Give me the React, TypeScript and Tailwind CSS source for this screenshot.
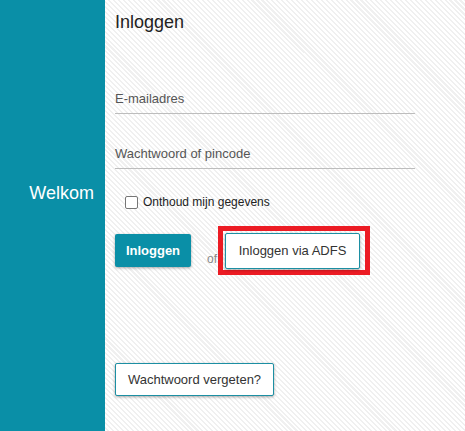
import React from "react";

export default function App() {
  return (
    <div
      className="flex h-[431px] w-full overflow-hidden"
      style={{ fontFamily: '"Liberation Sans", Arial, sans-serif' }}
    >
      <aside className="flex w-[105px] shrink-0 flex-col bg-[#0a8fa7] pr-[11px] pt-[182px] text-right">
        <span className="text-[18px] leading-[22px] text-white">Welkom</span>
      </aside>
      <main className="flex flex-1 flex-col bg-white bg-[repeating-linear-gradient(45deg,#ffffff_0px,#ffffff_2px,#f0f0f0_2px,#f0f0f0_3.5px,#ffffff_3.5px)] pl-[10px]">
        <h1 className="mt-[11px] text-[18px] leading-[22px] text-[#222]">Inloggen</h1>

        <div className="mt-[58px] w-[300px] border-b border-[#bdbdbd] pb-[6px]">
          <span className="block text-[13px] leading-[16px] text-[#555]">E-mailadres</span>
        </div>

        <div className="mt-[32px] w-[300px] border-b border-[#bdbdbd] pb-[6px]">
          <span className="block text-[13px] leading-[16px] text-[#555]">Wachtwoord of pincode</span>
        </div>

        <label className="ml-[10px] mt-[25px] flex h-[16px] items-center gap-[5px]">
          <span className="h-[13px] w-[13px] rounded-[2px] border border-[#767676] bg-white" />
          <span className="text-[12px] leading-[16px] text-[#222]">Onthoud mijn gegevens</span>
        </label>

        <div className="mt-[16px] flex items-center">
          <button className="h-[33px] w-[76px] rounded-[2px] bg-[#0a8fa7] text-[13px] font-bold text-white shadow-[0_1px_3px_rgba(0,0,0,0.35)]">
            Inloggen
          </button>
          <span className="ml-[16px] mt-[16px] text-[12px] leading-[16px] text-[#888]">of</span>
          <div className="ml-[1px] border-[5px] border-[#ec1c24] pb-[1px] pl-[2px] pr-[5px] pt-[2px]">
            <button className="h-[36px] w-[135px] rounded-[2px] border border-[#1c8fa3] bg-white text-[13px] text-[#333] shadow-[0_1px_3px_rgba(0,0,0,0.35)]">
              Inloggen via ADFS
            </button>
          </div>
        </div>

        <div className="mt-[88px]">
          <button className="h-[33px] w-[159px] rounded-[2px] border border-[#1c8fa3] bg-white text-[13px] text-[#333] shadow-[0_1px_3px_rgba(0,0,0,0.35)]">
            Wachtwoord vergeten?
          </button>
        </div>
      </main>
    </div>
  );
}
